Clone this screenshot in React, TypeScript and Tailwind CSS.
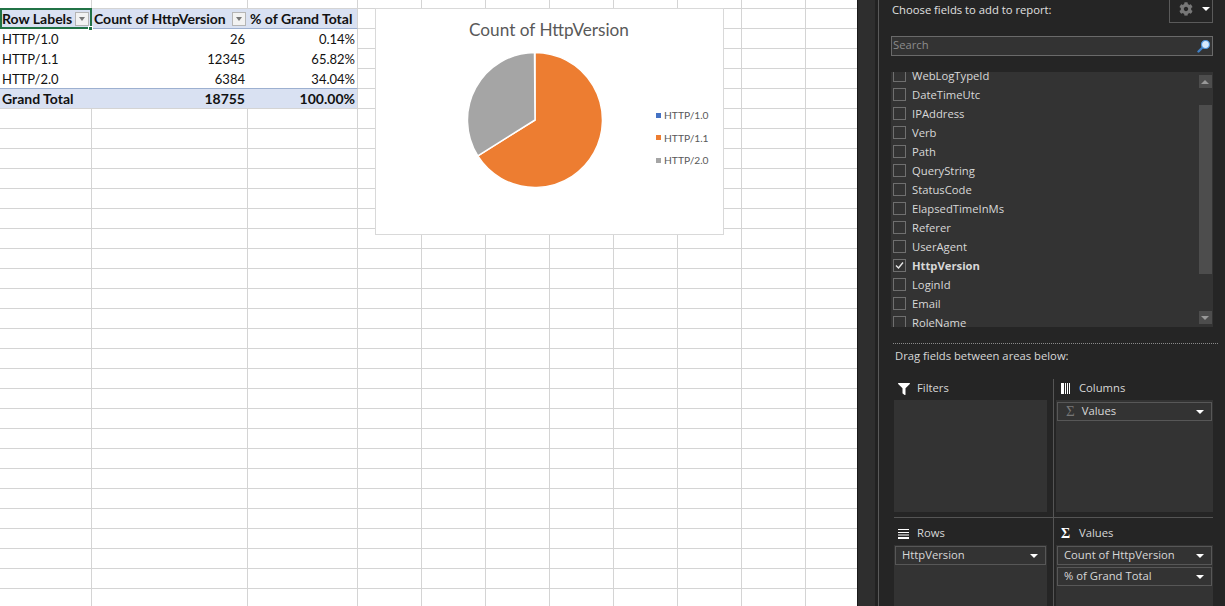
import type { ReactNode } from "react";
import { FaCog, FaFilter } from "react-icons/fa";

const colWidths = ["w-[64px]", "w-[64px]", "w-[64px]", "w-[64px]", "w-[64px]", "w-[64px]", "w-[64px]"];

const pivot = [
  { label: "Row Labels", count: "Count of HttpVersion", pct: "% of Grand Total", kind: "head" },
  { label: "HTTP/1.0", count: "26", pct: "0.14%", kind: "row" },
  { label: "HTTP/1.1", count: "12345", pct: "65.82%", kind: "row" },
  { label: "HTTP/2.0", count: "6384", pct: "34.04%", kind: "last" },
  { label: "Grand Total", count: "18755", pct: "100.00%", kind: "total" },
];

const fields = [
  "WebLogTypeId",
  "DateTimeUtc",
  "IPAddress",
  "Verb",
  "Path",
  "QueryString",
  "StatusCode",
  "ElapsedTimeInMs",
  "Referer",
  "UserAgent",
  "HttpVersion",
  "LoginId",
  "Email",
  "RoleName",
];

function FilterButton() {
  return (
    <span className="flex h-[14px] w-[14px] shrink-0 items-center justify-center border border-[#b5b5b5] bg-[#f2f2f2]">
      <span className="h-0 w-0 border-x-[3px] border-t-[4px] border-x-transparent border-t-[#767676]" />
    </span>
  );
}

function PivotCells({ row }: { row: (typeof pivot)[number] }) {
  const bg =
    row.kind === "head"
      ? "bg-[#d9e1f2] border-b border-b-[#9db0d0] font-bold text-[14px]"
      : row.kind === "total"
        ? "bg-[#d9e1f2] border-b border-b-[#d4d4d4] font-bold text-[14px]"
        : row.kind === "last"
          ? "border-b border-b-[#9db0d0] pt-[2px]"
          : "pt-[1px]";
  return (
    <>
      <div className={`relative flex w-[92px] items-center justify-between pl-[2px] pr-[3px] ${bg}`}>
        <span>{row.label}</span>
        {row.kind === "head" && (
          <>
            <FilterButton />
            <div className="absolute -top-[1px] bottom-[-1px] left-0 right-0 border-2 border-[#217346]" />
            <div className="absolute -bottom-[3px] -right-[1px] h-[5px] w-[5px] border border-white bg-[#217346]" />
          </>
        )}
      </div>
      <div className={`flex w-[156px] items-center justify-between pl-[2px] pr-[2px] ${bg}`}>
        {row.kind === "head" ? (
          <>
            <span>{row.count}</span>
            <FilterButton />
          </>
        ) : (
          <span className="ml-auto pr-[1px]">{row.count}</span>
        )}
      </div>
      <div
        className={`flex w-[110px] items-center pl-[2px] pr-[2px] ${bg} border-r border-r-[#d4d4d4] ${
          row.kind === "head" ? "justify-start" : "justify-end"
        }`}
      >
        {row.pct}
      </div>
    </>
  );
}

function Sheet() {
  const rows = Array.from({ length: 30 }, (_, i) => i);
  return (
    <div className="relative h-full w-[857px] shrink-0 overflow-hidden bg-white font-['Lato',sans-serif] text-[13px] text-[#111]">
      <div className="flex h-[9px]">
        <div className="h-full w-[92px] border-r border-b border-[#d4d4d4]" />
        <div className="h-full w-[156px] border-r border-b border-[#d4d4d4]" />
        <div className="h-full w-[110px] border-r border-b border-[#d4d4d4]" />
        {colWidths.map((w, i) => (
          <div key={i} className={`h-full ${w} border-r border-b border-[#d4d4d4]`} />
        ))}
        <div className="h-full w-[51px] border-b border-[#d4d4d4]" />
      </div>
      {rows.map((r) => (
        <div key={r} className="flex h-[20px]">
          {pivot[r] ? (
            <PivotCells row={pivot[r]} />
          ) : (
            <>
              <div className="w-[92px] border-r border-b border-[#d4d4d4]" />
              <div className="w-[156px] border-r border-b border-[#d4d4d4]" />
              <div className="w-[110px] border-r border-b border-[#d4d4d4]" />
            </>
          )}
          {colWidths.map((w, i) => (
            <div key={i} className={`${w} border-r border-b border-[#d4d4d4]`} />
          ))}
          <div className="w-[51px] border-b border-[#d4d4d4]" />
        </div>
      ))}
      <Chart />
    </div>
  );
}

function Chart() {
  return (
    <div className="absolute left-[375px] top-[8px] flex h-[227px] w-[349px] flex-col border border-[#d9d9d9] bg-white">
      <div className="mt-[9px] pr-[1px] text-center text-[17.2px] leading-[24px] text-[#595959]">Count of HttpVersion</div>
      <div className="flex">
        <svg width="140" height="140" viewBox="0 0 140 140" className="ml-[89px] mt-[8px] shrink-0">
          <path d="M70 70 L70 2.5 A67.5 67.5 0 1 1 12.8 105.9 Z" fill="#ed7d31" stroke="#fff" strokeWidth="1.5" />
          <path d="M70 70 L12.8 105.9 A67.5 67.5 0 0 1 69.5 2.5 Z" fill="#a5a5a5" stroke="#fff" strokeWidth="1.5" />
        </svg>
        <div className="ml-[51px] mt-[65px] flex flex-col gap-[6px] text-[10.25px] leading-[16.5px] text-[#595959]">
          <LegendItem color="bg-[#4472c4]" label="HTTP/1.0" />
          <LegendItem color="bg-[#ed7d31]" label="HTTP/1.1" />
          <LegendItem color="bg-[#a5a5a5]" label="HTTP/2.0" />
        </div>
      </div>
    </div>
  );
}

function LegendItem({ color, label }: { color: string; label: string }) {
  return (
    <div className="flex items-center gap-[3px]">
      <span className={`h-[5px] w-[5px] ${color}`} />
      {label}
    </div>
  );
}

function Arrow() {
  return <span className="h-0 w-0 border-x-[4px] border-t-[4px] border-x-transparent border-t-white" />;
}

function Sigma({ className }: { className: string }) {
  return <span className={`font-['Liberation_Serif',serif] ${className}`}>Σ</span>;
}

function FieldPill({ children }: { children: ReactNode }) {
  return (
    <div className="flex h-[19px] items-center justify-between border border-[#575757] bg-[#333] pl-[6px] pr-[7px] text-[#d8d8d8]">
      {children}
    </div>
  );
}

function Area({
  icon,
  label,
  headerClass,
  boxClass,
  left,
  children,
}: {
  icon: ReactNode;
  label: string;
  headerClass: string;
  boxClass: string;
  left?: boolean;
  children?: ReactNode;
}) {
  return (
    <div className={left ? "w-[160px] border-r border-[#555] pr-[6px]" : "w-[159px] pl-[2px]"}>
      <div className={`flex items-center ${headerClass} ${left ? "pl-[4px]" : "pl-[5px]"}`}>
        <span className={`flex items-center ${left ? "w-[19px]" : "w-[18px]"}`}>{icon}</span>
        <span className="text-[#d8d8d8]">{label}</span>
      </div>
      <div className={`flex flex-col gap-[2px] bg-[#333] px-[1px] ${boxClass}`}>{children}</div>
    </div>
  );
}

function ScrollBar() {
  return (
    <div className="flex w-[14px] shrink-0 flex-col items-center bg-[#333] pt-[3px]">
      <div className="flex h-[13px] w-[13px] items-center justify-center bg-[#4d4d4d]">
        <span className="h-0 w-0 border-x-[4px] border-b-[4px] border-x-transparent border-b-[#999]" />
      </div>
      <div className="mt-[17px] h-[169px] w-[13px] bg-[#4d4d4d]" />
      <div className="mt-[37px] flex h-[13px] w-[13px] items-center justify-center bg-[#4d4d4d]">
        <span className="h-0 w-0 border-x-[4px] border-t-[4px] border-x-transparent border-t-[#999]" />
      </div>
    </div>
  );
}

function FieldList() {
  return (
    <div className="mt-[16px] flex h-[255px] overflow-hidden bg-[#333]">
      <div className="-mt-[6px] flex-1 pl-[2px]">
        {fields.map((f) => (
          <div key={f} className="flex h-[19px] items-center">
            <span className="flex h-[13px] w-[13px] items-center justify-center border border-[#6f6f6f]">
              {f === "HttpVersion" && (
                <svg width="11" height="11" viewBox="0 0 11 11" fill="none">
                  <path d="M2 5.5 L4.5 8 L9 2.5" stroke="#e8e8e8" strokeWidth="1.4" />
                </svg>
              )}
            </span>
            <span className={`ml-[6px] pt-[2px] text-[#d8d8d8] ${f === "HttpVersion" ? "font-bold" : ""}`}>{f}</span>
          </div>
        ))}
      </div>
      <ScrollBar />
      <div className="w-[1px]" />
    </div>
  );
}

function Panel() {
  return (
    <div className="flex h-full flex-1 flex-col overflow-hidden border-l border-[#5a5a5a] bg-[#252525] px-[12px] font-['Open_Sans',sans-serif] text-[11.25px] text-[#e0e0e0]">
      <div className="flex h-[23px] shrink-0 items-start justify-between">
        <span className="pl-[1px] leading-[19px]">Choose fields to add to report:</span>
        <div className="flex h-[23px] w-[44px] items-center gap-[9px] border-x border-b border-[#5a5a5a] pb-[4px] pl-[9px]">
          <FaCog className="text-[14px] text-[#777]" />
          <Arrow />
        </div>
      </div>
      <div className="mt-[13px] flex h-[20px] shrink-0 items-center justify-between border border-[#6a6a6a] bg-[#333] pl-[1px] pr-[1px]">
        <span className="pb-[2px] text-[#8c8c8c]">Search</span>
        <svg width="14" height="14" viewBox="0 0 14 14">
          <path d="M1.5 12.5 L6 8" stroke="#3f7fc4" strokeWidth="2.4" strokeLinecap="round" />
          <circle cx="8.5" cy="5.5" r="4" fill="#d5e8fb" stroke="#4b93dc" strokeWidth="1.2" />
        </svg>
      </div>
      <FieldList />
      <div className="mt-[16px] ml-[2px] -mr-[5px] h-0 shrink-0 border-t border-dotted border-[#8a8a8a]" />
      <div className="flex h-[24px] shrink-0 items-center pl-[4px] text-[#d8d8d8]">Drag fields between areas below:</div>
      <div className="ml-[3px] mt-[11px] flex h-[139px] shrink-0 border-b border-[#555]">
        <Area
          left
          icon={<FaFilter className="text-[12px] text-white" />}
          label="Filters"
          headerClass="h-[21px] pb-[2px]"
          boxClass="h-[112px] w-[153px]"
        />
        <Area
          icon={
            <svg width="10" height="11" viewBox="0 0 10 11">
              <path d="M0 0h3v11H0zM4 0h1v11H4zM6 0h1v11H6zM8 0h1v11H8z" fill="#fff" />
            </svg>
          }
          label="Columns"
          headerClass="h-[21px] pb-[2px]"
          boxClass="h-[112px] w-[157px] pt-[2px]"
        >
          <FieldPill>
            <span className="flex items-center gap-[7px] pl-[2px]">
              <Sigma className="text-[15px] leading-none text-[#777]" />
              Values
            </span>
            <Arrow />
          </FieldPill>
        </Area>
      </div>
      <div className="ml-[3px] flex flex-1">
        <Area
          left
          icon={
            <svg width="11" height="10" viewBox="0 0 11 10">
              <path d="M0 0h11v1H0zM0 3h11v1H0zM0 5.5h11v1H0zM0 8h11v2H0z" fill="#fff" />
            </svg>
          }
          label="Rows"
          headerClass="h-[27px] pt-[4px]"
          boxClass="h-[61px] w-[153px] pt-[1px]"
        >
          <FieldPill>
            HttpVersion
            <Arrow />
          </FieldPill>
        </Area>
        <Area
          icon={<Sigma className="text-[14px] font-bold leading-none text-white" />}
          label="Values"
          headerClass="h-[27px] pt-[4px]"
          boxClass="h-[61px] w-[157px] pt-[1px]"
        >
          <FieldPill>
            Count of HttpVersion
            <Arrow />
          </FieldPill>
          <FieldPill>
            % of Grand Total
            <Arrow />
          </FieldPill>
        </Area>
      </div>
    </div>
  );
}

export default function App() {
  return (
    <div className="flex h-[606px] w-[1225px] overflow-hidden">
      <Sheet />
      <div className="flex h-full w-[21px] shrink-0 border-l border-[#1a1a1a] bg-[#2e2e2e]">
        <div className="ml-auto h-full w-[3px] bg-[#222]" />
      </div>
      <Panel />
    </div>
  );
}
